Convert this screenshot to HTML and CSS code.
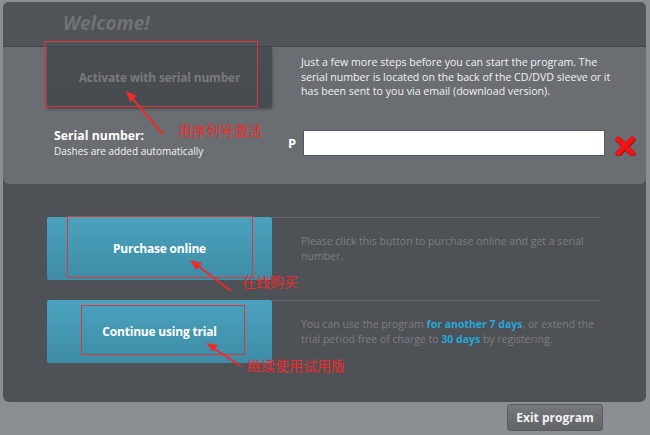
FILE: index.html
```html
<!DOCTYPE html>
<html lang="en">
<head>
  <meta charset="UTF-8" />
  <meta name="viewport" content="width=device-width, initial-scale=1" />
  <title>Welcome</title>
  <link rel="stylesheet" href="styles.css">
</head>
<body>
  <div class="frame">
    <div class="window">
      <header class="title">Welcome!</header>

      <!-- Activation panel -->
      <section class="activate">
        <div class="activate-top">
          <button class="btn-dark">Activate with serial number</button>
          <p class="intro">Just a few more steps before you can start the program. The serial number is located on the back of the CD/DVD sleeve or it has been sent to you via email (download version).</p>
        </div>
        <div class="serial-row">
          <div class="serial-label">
            <strong>Serial number:</strong>
            <span>Dashes are added automatically</span>
          </div>
          <span class="prefix">P</span>
          <input class="serial-input" type="text">
          <svg class="clear" width="22" height="20" viewBox="0 0 22 20">
            <path d="M4 3 L18 17 M18 3 L4 17" stroke="#b50d0d" stroke-width="6" stroke-linecap="round" transform="translate(0.6 0.8)"/>
            <path d="M4 3 L18 17 M18 3 L4 17" stroke="#f01414" stroke-width="5" stroke-linecap="round"/>
          </svg>
        </div>
      </section>

      <!-- Options -->
      <section class="options">
        <div class="option">
          <button class="btn-teal">Purchase online</button>
          <p class="option-text">Please click this button to purchase online and get a serial number.</p>
        </div>
        <div class="option">
          <button class="btn-teal">Continue using trial</button>
          <p class="option-text"><span>You can use the program <b>for another 7 days</b>, or extend the</span><br><span>trial period free of charge to <b>30 days</b> by registering.</span></p>
        </div>
      </section>
    </div>

    <footer class="bottom">
      <button class="btn-exit">Exit program</button>
    </footer>

    <!-- Red annotations drawn over the screenshot -->
    <div class="note-box box-1"></div>
    <div class="note-box box-2"></div>
    <div class="note-box box-3"></div>
    <svg class="arrows" width="650" height="435" viewBox="0 0 650 435">
      <g stroke="#ec2b2b" stroke-width="2" fill="#ec2b2b">
        <line x1="163" y1="134" x2="131" y2="97"/>
        <polygon points="126,91 137,96 130,102" stroke="none"/>
        <line x1="231" y1="291" x2="197" y2="265"/>
        <polygon points="190,260 202,263 196,270" stroke="none"/>
        <line x1="241" y1="366" x2="213" y2="348"/>
        <polygon points="206,343 218,345 213,352" stroke="none"/>
      </g>
    </svg>
    <span class="note note-1">用序列号激活</span>
    <span class="note note-2">在线购买</span>
    <span class="note note-3">继续使用试用版</span>
  </div>
</body>
</html>
```

FILE: styles.css
```css
/* Reset & Global Styles */
html, body {
  margin: 0;
  padding: 0;
  width: 100%;
  height: 100%;
  font-family: 'Open Sans', 'Noto Sans', sans-serif;
}
body {
  background-color: #8b8e92;
  overflow: hidden;
}
.frame {
  position: relative;
  width: 650px;
  height: 435px;
  display: flex;
  flex-direction: column;
}
button {
  font-family: inherit;
  border: none;
  padding: 0;
  cursor: pointer;
}
/* Main window */
.window {
  margin: 2px 4px 0 3px;
  height: 400px;
  background-color: #4e5156;
  border-radius: 6px;
  overflow: hidden;
}
.title {
  height: 44px;
  line-height: 42px;
  padding-left: 60px;
  font-size: 19px;
  font-weight: bold;
  font-style: italic;
  color: #6f7277;
  background-color: #505358;
}
/* Activation panel */
.activate {
  height: 138px;
  background-color: #6a6d72;
  border-top: 1px solid #43464a;
  border-radius: 0 0 6px 6px;
  padding-left: 44px;
  box-sizing: border-box;
}
.activate-top {
  display: flex;
}
.btn-dark {
  width: 225px;
  height: 60px;
  flex-shrink: 0;
  background: linear-gradient(#4a4d52, #474a4f);
  box-shadow: 0 2px 3px rgba(0, 0, 0, 0.35);
  color: #777a7e;
  font-size: 12px;
  font-weight: bold;
  letter-spacing: -0.2px;
}
.intro {
  margin: 8px 0 0 29px;
  width: 320px;
  font-size: 10.6px;
  line-height: 14.5px;
  color: #f2f2f2;
}
.serial-row {
  display: flex;
  align-items: center;
  margin-top: 23px;
  height: 26px;
}
.serial-label {
  width: 225px;
  padding-left: 7px;
  box-sizing: border-box;
  display: flex;
  flex-direction: column;
  color: #fff;
}
.serial-label strong {
  font-size: 12.3px;
  line-height: 16px;
}
.serial-label span {
  font-size: 10px;
  line-height: 14px;
  color: #f4f4f4;
}
.prefix {
  margin-left: 16px;
  width: 15px;
  font-size: 13px;
  font-weight: bold;
  color: #fff;
}
.serial-input {
  width: 302px;
  height: 26px;
  box-sizing: border-box;
  border: 1px solid #55585c;
  background: #fff;
}
.clear {
  margin-left: 9px;
  margin-top: 6px;
}
/* Options */
.options {
  padding-top: 33px;
  display: flex;
  flex-direction: column;
  gap: 20px;
}
.option {
  display: flex;
  padding-left: 44px;
}
.btn-teal {
  width: 225px;
  height: 63px;
  flex-shrink: 0;
  background: linear-gradient(#4ba2be, #3e8ca6);
  border-radius: 2px;
  color: #fff;
  font-size: 12px;
  font-weight: bold;
  letter-spacing: -0.2px;
}
.option-text {
  margin: 0;
  width: 329px;
  border-top: 1px solid #67696e;
  padding: 16px 0 0 29px;
  box-sizing: border-box;
  font-size: 10.5px;
  line-height: 14.5px;
  color: #7c7f84;
}
.option-text b {
  color: #27a8d8;
}
/* Bottom bar */
.bottom {
  display: flex;
  justify-content: flex-end;
  padding: 2px 47px 0 0;
}
.btn-exit {
  width: 96px;
  height: 27px;
  border: 1px solid #5a5d61;
  border-radius: 3px;
  background: linear-gradient(#75787c, #606367);
  color: #f2f2f2;
  font-size: 12px;
  font-weight: bold;
}
/* Annotations */
.note-box {
  position: absolute;
  border: 1px solid #e0363a;
}
.box-1 { left: 44px; top: 41px; width: 212px; height: 64px; }
.box-2 { left: 67px; top: 216px; width: 184px; height: 60px; }
.box-3 { left: 81px; top: 305px; width: 162px; height: 48px; }
.arrows {
  position: absolute;
  left: 0;
  top: 0;
}
.note {
  position: absolute;
  font-family: 'Noto Sans CJK SC', sans-serif;
  font-size: 14px;
  line-height: 16px;
  color: #ec2b2b;
}
.note-1 { left: 178px; top: 122px; }
.note-2 { left: 242px; top: 273px; }
.note-3 { left: 247px; top: 357px; }
```
